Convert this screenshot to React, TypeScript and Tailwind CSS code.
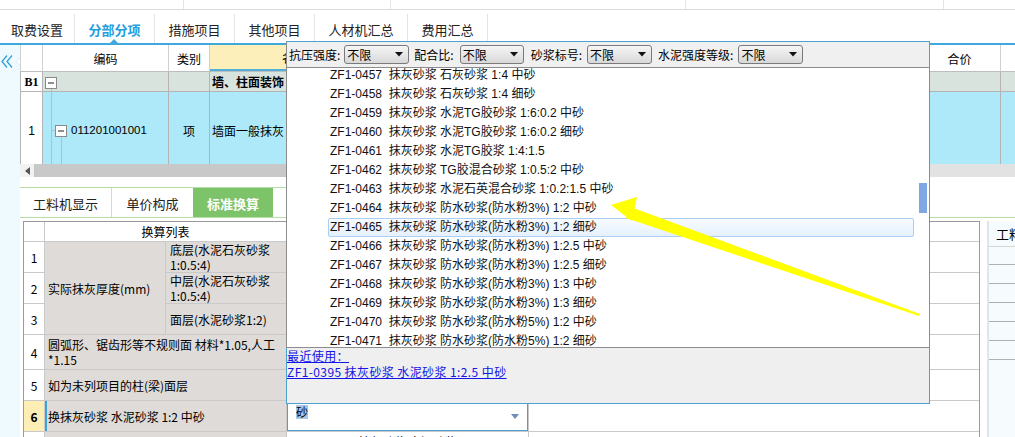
import React from "react";

const items: [string, string][] = [
  ["ZF1-0457", "抹灰砂浆 石灰砂浆 1:4 中砂"],
  ["ZF1-0458", "抹灰砂浆 石灰砂浆 1:4 细砂"],
  ["ZF1-0459", "抹灰砂浆 水泥TG胶砂浆 1:6:0.2 中砂"],
  ["ZF1-0460", "抹灰砂浆 水泥TG胶砂浆 1:6:0.2 细砂"],
  ["ZF1-0461", "抹灰砂浆 水泥TG胶浆 1:4:1.5"],
  ["ZF1-0462", "抹灰砂浆 TG胶混合砂浆 1:0.5:2 中砂"],
  ["ZF1-0463", "抹灰砂浆 水泥石英混合砂浆 1:0.2:1.5 中砂"],
  ["ZF1-0464", "抹灰砂浆 防水砂浆(防水粉3%) 1:2 中砂"],
  ["ZF1-0465", "抹灰砂浆 防水砂浆(防水粉3%) 1:2 细砂"],
  ["ZF1-0466", "抹灰砂浆 防水砂浆(防水粉3%) 1:2.5 中砂"],
  ["ZF1-0467", "抹灰砂浆 防水砂浆(防水粉3%) 1:2.5 细砂"],
  ["ZF1-0468", "抹灰砂浆 防水砂浆(防水粉3%) 1:3 中砂"],
  ["ZF1-0469", "抹灰砂浆 防水砂浆(防水粉3%) 1:3 细砂"],
  ["ZF1-0470", "抹灰砂浆 防水砂浆(防水粉5%) 1:2 中砂"],
  ["ZF1-0471", "抹灰砂浆 防水砂浆(防水粉5%) 1:2 细砂"],
];

function SelArrow() {
  return (
    <svg width="8" height="5" className="ml-auto mr-[5px] shrink-0">
      <polygon points="0,0 8,0 4,4.5" fill="#111" />
    </svg>
  );
}

function Sel({ w }: { w: string }) {
  return (
    <div
      className={`flex h-[19px] items-center rounded-[3px] border border-[#7a7a7a] bg-linear-to-b from-[#f6f6f6] to-[#d8d8d8] pl-[2px] text-[12px] leading-[17px] text-black ${w}`}
    >
      不限
      <SelArrow />
    </div>
  );
}

export default function App() {
  return (
    <div className="relative h-[437px] w-[1015px] overflow-hidden bg-white text-black font-[family-name:'Noto_Sans_CJK_SC',sans-serif]">
      {/* top strip */}
      <div className="flex h-[10px] border-b border-[#dcdcdc]">
        <div className="w-[184px] border-r border-[#e4e4e4]" />
        <div className="w-[207px] border-r border-[#e4e4e4]" />
        <div className="w-[295px] border-r border-[#e4e4e4]" />
        <div className="w-[258px] border-r border-[#e4e4e4]" />
      </div>

      {/* main tabs */}
      <div className="flex h-[35px] border-b-2 border-[#3fa9dd] text-[13px] text-[#222]">
        <div className="mt-[4px] flex w-[75px] items-center justify-center border-r border-[#e4e4e4] pt-[3px]">取费设置</div>
        <div className="relative mt-[4px] flex w-[80px] items-center justify-center border-r border-[#e4e4e4] pt-[3px] font-bold text-[#1f9ee0]">
          分部分项
          <div className="absolute bottom-0 left-[35px] h-0 w-0 border-x-[4px] border-b-[4px] border-x-transparent border-b-[#3fa9dd]" />
        </div>
        <div className="mt-[4px] flex w-[80px] items-center justify-center border-r border-[#e4e4e4] pt-[3px]">措施项目</div>
        <div className="mt-[4px] flex w-[80px] items-center justify-center border-r border-[#e4e4e4] pt-[3px]">其他项目</div>
        <div className="mt-[4px] flex w-[93px] items-center justify-center border-r border-[#e4e4e4] pt-[3px]">人材机汇总</div>
        <div className="mt-[4px] flex w-[80px] items-center justify-center border-r border-[#e4e4e4] pt-[3px]">费用汇总</div>
      </div>

      {/* body */}
      <div className="flex h-[392px]">
        {/* sidebar */}
        <div className="w-[20px] shrink-0 bg-[#eefafd]">
          <svg width="20" height="16" className="mt-[9px]">
            <polyline points="7,1.5 2,7.5 7,13.5" fill="none" stroke="#2f9fd6" strokeWidth="1.3" />
            <polyline points="12,1.5 7,7.5 12,13.5" fill="none" stroke="#2f9fd6" strokeWidth="1.3" />
            <polygon points="20.5,3 16,7.5 20.5,12" fill="#ffffff" stroke="#d6ecf2" strokeWidth="1" />
          </svg>
        </div>

        <div className="min-w-0 flex-1 overflow-hidden">
          {/* grid header */}
          <div className="flex h-[27px] border-b border-[#bdbdbd] text-[12px]">
            <div className="w-[23px] shrink-0 border-x border-[#d0d0d0]" />
            <div className="flex w-[126px] shrink-0 items-center justify-center border-r border-[#d0d0d0] pt-[2px]">编码</div>
            <div className="flex w-[41px] shrink-0 items-center justify-center border-r border-[#d0d0d0] pt-[2px]">类别</div>
            <div className="flex flex-1 items-center border-r border-b-2 border-r-[#d0d0d0] border-b-[#4fb0dc] bg-[#fdefb9] pl-[72px] pt-[2px]">名称</div>
            <div className="flex w-[82px] shrink-0 items-center justify-center border-r border-[#d0d0d0] pt-[2px]">合价</div>
            <div className="w-[14px] shrink-0" />
          </div>

          {/* B1 row */}
          <div className="flex h-[20px] border-b border-[#b4b4b4] bg-[#d9e3de] text-[12px]">
            <div className="flex w-[23px] shrink-0 items-center justify-center border-x border-[#b4b4b4] bg-white font-bold font-[family-name:'Liberation_Serif',serif]">B1</div>
            <div className="flex w-[126px] shrink-0 border-r border-[#b4b4b4]">
              <svg width="20" height="20" className="shrink-0">
                <line x1="8.5" y1="16.5" x2="8.5" y2="20" stroke="#bcbcbc" />
                <rect x="2.5" y="5.5" width="11" height="11" fill="#ffffff" stroke="#8a8a8a" />
                <line x1="5" y1="11" x2="11" y2="11" stroke="#222" />
              </svg>
            </div>
            <div className="w-[41px] shrink-0 border-r border-[#b4b4b4]" />
            <div className="flex flex-1 items-center border-r border-[#b4b4b4] pl-[2px] font-bold">墙、柱面装饰</div>
            <div className="w-[82px] shrink-0 border-r border-[#b4b4b4]" />
            <div className="w-[14px] shrink-0" />
          </div>

          {/* row 1 */}
          <div className="flex h-[72px] bg-[#aee9f9] text-[12px]">
            <div className="flex w-[23px] shrink-0 items-center justify-center border-x border-[#b4b4b4] bg-white pt-[6px] font-[family-name:'Liberation_Sans',sans-serif]">1</div>
            <div className="flex w-[126px] shrink-0 border-r border-[#b4b4b4]">
              <svg width="28" height="72" className="shrink-0">
                <line x1="8.5" y1="0" x2="8.5" y2="72" stroke="#bcbcbc" />
                <line x1="8.5" y1="38.5" x2="12.5" y2="38.5" stroke="#bcbcbc" />
                <line x1="18.5" y1="44.5" x2="18.5" y2="72" stroke="#bcbcbc" />
                <rect x="12.5" y="33.5" width="11" height="11" fill="#ffffff" stroke="#8a8a8a" />
                <line x1="15" y1="39" x2="21" y2="39" stroke="#222" />
              </svg>
              <span className="mt-[6px] self-center text-[11.5px] font-[family-name:'Liberation_Sans',sans-serif]">011201001001</span>
            </div>
            <div className="flex w-[41px] shrink-0 items-center justify-center border-r border-[#b4b4b4] pt-[6px]">项</div>
            <div className="flex flex-1 items-center border-r border-[#b4b4b4] pl-[2px] pt-[6px]">墙面一般抹灰</div>
            <div className="w-[82px] shrink-0 border-r border-[#b4b4b4]" />
            <div className="w-[14px] shrink-0" />
          </div>

          {/* h scrollbar */}
          <div className="flex h-[13px] bg-[#e2e2e2]">
            <div className="flex w-[15px] shrink-0 items-center justify-center border-r border-[#c4c4c4] bg-[#f2f2f2]">
              <svg width="5" height="8">
                <polygon points="5,0 0,4 5,8" fill="#555" />
              </svg>
            </div>
            <div className="w-[680px] bg-[#c8c8c8]" />
          </div>

          {/* lower tabs */}
          <div className="mt-[10px] border-b border-[#b5dfa5]">
            <div className="flex h-[30px] w-[909px] border-t border-[#b5dfa5] text-[13px] text-[#222]">
              <div className="flex w-[92px] items-center justify-center border-r border-[#c6e6b8] pt-[3px]">工料机显示</div>
              <div className="flex w-[81px] items-center justify-center pt-[3px]">单价构成</div>
              <div className="flex w-[80px] items-center justify-center bg-[#7cc36a] pt-[3px] font-bold text-white">标准换算</div>
            </div>
          </div>

          {/* lower area */}
          <div className="mt-[3px] flex pl-[3px]">
            <div className="grid w-[957px] shrink-0 grid-cols-[20px_120px_120px_241px_1fr] grid-rows-[19px_30px_30px_30px_34px_30px_30px_30px] gap-px border border-[#9a9a9a] bg-[#c9c9c9] text-[12px] leading-[15px]">
              {/* header */}
              <div className="bg-white" />
              <div className="col-span-2 flex items-center justify-center bg-white">换算列表</div>
              <div className="bg-white" />
              <div className="bg-white" />
              {/* row 1 */}
              <div className="flex items-center justify-center bg-white">1</div>
              <div className="row-span-3 flex items-center bg-[#dfdbd8] pl-[3px]">实际抹灰厚度(mm)</div>
              <div className="flex items-center bg-[#dfdbd8] pl-[4px]">
                底层(水泥石灰砂浆
                <br />
                1:0.5:4)
              </div>
              <div className="bg-white" />
              <div className="bg-white" />
              {/* row 2 */}
              <div className="flex items-center justify-center bg-white">2</div>
              <div className="flex items-center bg-[#dfdbd8] pl-[4px]">
                中层(水泥石灰砂浆
                <br />
                1:0.5:4)
              </div>
              <div className="bg-white" />
              <div className="bg-white" />
              {/* row 3 */}
              <div className="flex items-center justify-center bg-white">3</div>
              <div className="flex items-center bg-[#dfdbd8] pl-[4px]">面层(水泥砂浆1:2)</div>
              <div className="bg-white" />
              <div className="bg-white" />
              {/* row 4 */}
              <div className="flex items-center justify-center bg-white">4</div>
              <div className="col-span-2 flex items-center bg-[#dfdbd8] pl-[3px]">
                <div>
                  圆弧形、锯齿形等不规则面 材料*1.05,人工
                  <br />
                  *1.15
                </div>
              </div>
              <div className="bg-white" />
              <div className="bg-white" />
              {/* row 5 */}
              <div className="flex items-center justify-center bg-white">5</div>
              <div className="col-span-2 flex items-center bg-[#dfdbd8] pl-[3px]">如为未列项目的柱(梁)面层</div>
              <div className="bg-white" />
              <div className="bg-white" />
              {/* row 6 */}
              <div className="flex items-center justify-center bg-[#fdeeb5] font-bold">6</div>
              <div className="col-span-2 flex items-center border-l-2 border-[#3aa3d8] bg-[#dfdbd8] pl-[1px]">换抹灰砂浆 水泥砂浆 1:2 中砂</div>
              <div className="flex items-start border border-[#4aa3cf] bg-white">
                <span className="ml-[8px] mt-[3px] inline-block h-[14px] bg-[#a9c6e6] leading-[14px]">砂</span>
                <svg width="8" height="5" className="ml-auto mr-[8px] self-center">
                  <polygon points="0,0 8,0 4,5" fill="#6b8fb6" />
                </svg>
              </div>
              <div className="bg-white" />
              {/* row 7 */}
              <div className="bg-white" />
              <div className="col-span-2 bg-[#dfdbd8]" />
              <div className="flex justify-center bg-white pt-[2px] leading-[16px]">抹灰砂浆 水泥砂浆</div>
              <div className="bg-white" />
            </div>

            {/* right panel */}
            <div className="ml-[7px] w-[28px] shrink-0 border-l-2 border-[#dde6e8] bg-[#f6fcfd] text-[12px]">
              <div className="flex h-[26px] items-center whitespace-nowrap border-b border-[#d4d4d4] pl-[7px] text-[13px]">工料</div>
              <div className="h-[18px] border-b border-[#b0b0b0]" />
              <div className="h-[19px] border-b border-[#b0b0b0]" />
              <div className="h-[19px] border-b border-[#b0b0b0]" />
              <div className="h-[19px] border-b border-[#b0b0b0]" />
              <div className="h-[19px] border-b border-[#b0b0b0]" />
              <div className="h-[19px] border-b border-[#b0b0b0]" />
            </div>
          </div>
        </div>
      </div>

      {/* popup dropdown */}
      <div className="absolute left-[286px] top-[41px] flex w-[644px] flex-col">
        <div className="flex h-[27px] items-center border-x border-b border-t border-x-[#8c8c8c] border-b-[#8c8c8c] border-t-[#4aa3cf] bg-[#f0f0f0] pl-[2px] text-[12px]">
          <span>抗压强度:</span>
          <div className="ml-[4px]"><Sel w="w-[65px]" /></div>
          <span className="ml-[5px]">配合比:</span>
          <div className="ml-[6px]"><Sel w="w-[64px]" /></div>
          <span className="ml-[7px]">砂浆标号:</span>
          <div className="ml-[5px]"><Sel w="w-[65px]" /></div>
          <span className="ml-[6px]">水泥强度等级:</span>
          <div className="ml-[5px]"><Sel w="w-[65px]" /></div>
        </div>
        <div className="relative h-[280px] overflow-hidden border-x border-b border-[#8c8c8c] bg-white">
          <div className="-mt-[2px] flex flex-col text-[12px] text-[#111] font-[family-name:'Liberation_Sans','Noto_Sans_CJK_SC',sans-serif]">
            {items.map(([code, desc]) =>
              code === "ZF1-0465" ? (
                <div
                  key={code}
                  className="ml-[41px] h-[19px] w-[586px] whitespace-pre rounded-[2px] border border-[#a9cff5] bg-linear-to-b from-[#f8fbff] to-[#e5f1fd] pl-[1px] leading-[17px]"
                >
                  {code}  {desc}
                </div>
              ) : (
                <div key={code} className="ml-[41px] h-[19px] w-[586px] whitespace-pre pl-[2px] leading-[19px]">
                  {code}  {desc}
                </div>
              )
            )}
          </div>
          <div className="absolute right-[2px] top-[115px] h-[30px] w-[8px] bg-[#7fa7e2]" />
        </div>
        <div className="h-[56px] border-x border-b border-[#4aa3cf] bg-[#efefef] text-[12px] leading-[16px] tracking-[0.4px] text-[#1414e6]">
          <div className="underline">最近使用：</div>
          <div className="underline">ZF1-0395 抹灰砂浆 水泥砂浆 1:2.5 中砂</div>
        </div>
      </div>

      {/* yellow annotation arrow */}
      <svg width="1015" height="437" className="pointer-events-none absolute left-0 top-0">
        <polygon points="628,206 920,314 919,316 626,218" fill="#ffff00" />
        <polygon points="611,205 637,197 632,221" fill="#ffff00" />
      </svg>
    </div>
  );
}
